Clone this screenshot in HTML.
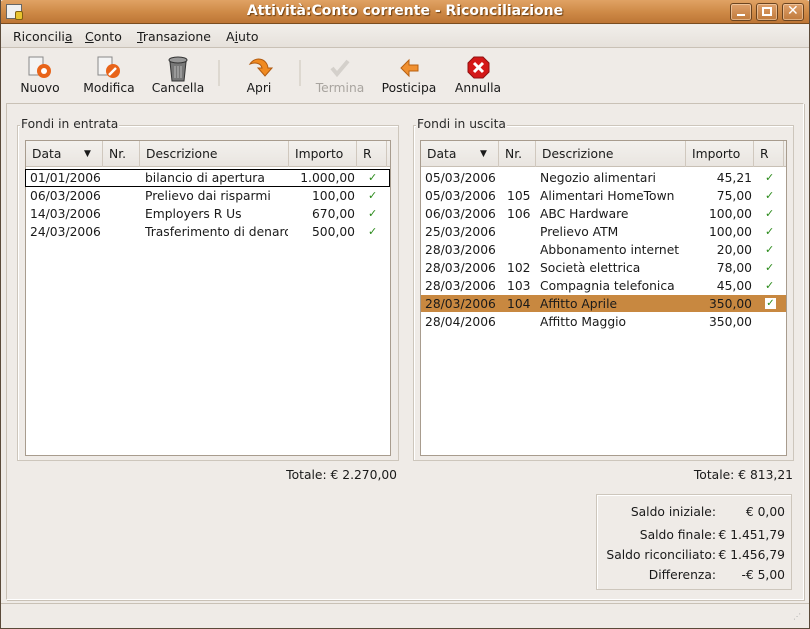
<!DOCTYPE html>
<html><head><meta charset="utf-8"><style>
*{margin:0;padding:0;box-sizing:border-box}
body{width:810px;height:629px;overflow:hidden;background:#efebe7;font-family:"DejaVu Sans","Liberation Sans",sans-serif;font-size:11px;color:#1a1a1a;position:relative}
.a{position:absolute;white-space:nowrap}
#win{position:absolute;left:0;top:0;width:810px;height:629px;border:1px solid #5a4a3a;border-top:none}
#title{position:absolute;left:0;top:0;width:810px;height:24px;background:linear-gradient(#e0a264,#cf8b48 50%,#bd7535);border-bottom:1px solid #7a4d20;border-radius:4px 4px 0 0}
.tb{position:absolute;top:3px;width:22px;height:18px;border:1px solid #6b4420;border-radius:3px;background:linear-gradient(#dea06a,#c07a3c);box-shadow:inset 0 0 0 1px rgba(255,230,200,.5)}
.hdr{position:absolute;top:0;height:26px;border-right:1px solid #d0c8be;padding-left:6px;line-height:26px;font-size:12.3px}
.tree{position:absolute;background:#fff;border:1px solid #a89c8e}
.thead{position:absolute;left:0;top:0;right:0;height:26px;background:linear-gradient(#f3f1ee,#e9e5e0);border-bottom:1px solid #c8c0b5}
.row{position:absolute;left:0;right:0;height:18px;line-height:18px;font-size:12.3px}
.ck{color:#2a8a1a;font-size:11px}
.frame{position:absolute;border:1px solid #cdc6bc;box-shadow:inset 1px 1px 0 #fff}
.flab{position:absolute;background:#efebe7;padding:0 1px;font-size:12.3px;color:#2a2a2a}
.tl{font-size:12.3px;text-align:center}
.s{font-size:12.3px}
</style></head><body>
<div id="title">
 <div class="a" style="left:6px;top:4px;width:16px;height:15px;background:#f0f0f0;border:1px solid #666"></div>
 <div class="a" style="left:15px;top:11px;width:8px;height:9px;background:#e8c430;border:1px solid #806010;border-radius:2px"></div>
 <div class="a" style="left:0;width:810px;top:3px;text-align:center;font-weight:bold;font-size:14px;color:#fff;text-shadow:1px 1px 1px #6a3e12">Attività:Conto corrente - Riconciliazione</div>
 <div class="tb" style="left:730px"><div class="a" style="left:6px;top:10px;width:8px;height:2px;background:#fff"></div></div>
 <div class="tb" style="left:756px"><div class="a" style="left:5px;top:3px;width:10px;height:9px;border:2px solid #fff"></div></div>
 <div class="tb" style="left:782px"><div class="a" style="left:4px;top:-1px;color:#fff;font-weight:bold;font-size:14px">✕</div></div>
</div>
<div class="a" style="left:1px;top:25px;width:808px;height:23px;background:linear-gradient(#f1eeea,#e6e1db);border-bottom:1px solid #c9c1b6"></div>
<div class="a" style="left:13px;top:29px;font-size:12.5px">Riconcili<u>a</u></div>
<div class="a" style="left:85px;top:29px;font-size:12.5px"><u>C</u>onto</div>
<div class="a" style="left:137px;top:29px;font-size:12.5px"><u>T</u>ransazione</div>
<div class="a" style="left:226px;top:29px;font-size:12.5px">A<u>i</u>uto</div>

<svg class="a" style="left:0;top:52px" width="810" height="34">
 <rect x="29" y="5" width="14" height="18" fill="#f4f4f4" stroke="#888"/><circle cx="44" cy="19" r="7" fill="#e8641a"/><circle cx="44" cy="19" r="3" fill="#fff"/>
 <rect x="98" y="5" width="14" height="18" fill="#f4f4f4" stroke="#888"/><circle cx="113" cy="19" r="7" fill="#e8641a"/><path d="M109 23l7-7" stroke="#fff" stroke-width="2.5"/>
 <path d="M170 10h16l-2 19h-12z" fill="#777" stroke="#333"/><ellipse cx="178" cy="8" rx="9" ry="3" fill="#999" stroke="#333"/><path d="M175 14v12M178 14v12M181 14v12" stroke="#bbb"/>
 <line x1="219" y1="8" x2="219" y2="40" stroke="#cbc4ba"/>
 <path d="M250 12c5-8 17-6 18 4l4 0-7 8-7-8 4 0c-1-5-7-6-12-4z" fill="#f08a20" stroke="#b05a10"/>
 <line x1="300" y1="8" x2="300" y2="40" stroke="#cbc4ba"/>
 <path d="M332 16l5 6 11-13" fill="none" stroke="#d4d0cb" stroke-width="4"/>
 <path d="M401 16l8-8v5h9v6h-9v5z" fill="#f09030" stroke="#b86010"/>
 <path d="M474 5h9l6 6v9l-6 6h-9l-6-6v-9z" fill="#d41818" stroke="#901010"/><path d="M474 11l9 9M483 11l-9 9" stroke="#fff" stroke-width="3"/>
</svg>
<div class="a tl" style="left:10px;top:81px;width:60px">Nuovo</div>
<div class="a tl" style="left:79px;top:81px;width:60px">Modifica</div>
<div class="a tl" style="left:146px;top:81px;width:64px">Cancella</div>
<div class="a tl" style="left:229px;top:81px;width:60px">Apri</div>
<div class="a tl" style="left:310px;top:81px;width:60px;color:#a8a49f">Termina</div>
<div class="a tl" style="left:376px;top:81px;width:66px">Posticipa</div>
<div class="a tl" style="left:448px;top:81px;width:60px">Annulla</div>

<div class="a" style="left:6px;top:103px;width:798px;height:497px;border:1px solid #c9c1b6;border-bottom-color:#fff;border-right-color:#fff;box-shadow:1px 1px 0 #c9c1b6"></div>

<div class="frame" style="left:17px;top:125px;width:382px;height:336px"></div>
<div class="flab" style="left:20px;top:117px">Fondi in entrata</div>
<div class="tree" style="left:25px;top:140px;width:366px;height:316px">
 <div class="thead">
  <div class="hdr" style="left:0;width:77px">Data<span class="a" style="left:58px;top:0;font-size:9px">▼</span></div>
  <div class="hdr" style="left:77px;width:37px">Nr.</div>
  <div class="hdr" style="left:114px;width:149px">Descrizione</div>
  <div class="hdr" style="left:263px;width:68px">Importo</div>
  <div class="hdr" style="left:331px;width:30px">R</div>
 </div>
 <div class="row" style="top:28px;border:1px solid #000;height:18px;margin:0 0 0 -1px"></div>
 <div class="row" style="top:28px"><span class="a" style="left:4px">01/01/2006</span><span class="a" style="left:119px">bilancio di apertura</span><span class="a" style="right:35px">1.000,00</span><span class="a ck" style="left:342px">✓</span></div>
 <div class="row" style="top:46px"><span class="a" style="left:4px">06/03/2006</span><span class="a" style="left:119px">Prelievo dai risparmi</span><span class="a" style="right:35px">100,00</span><span class="a ck" style="left:342px">✓</span></div>
 <div class="row" style="top:64px"><span class="a" style="left:4px">14/03/2006</span><span class="a" style="left:119px">Employers R Us</span><span class="a" style="right:35px">670,00</span><span class="a ck" style="left:342px">✓</span></div>
 <div class="row" style="top:82px"><span class="a" style="left:4px">24/03/2006</span><span class="a" style="left:119px;width:143px;overflow:hidden">Trasferimento di denaro</span><span class="a" style="right:35px">500,00</span><span class="a ck" style="left:342px">✓</span></div>
</div>
<div class="a s" style="right:413px;top:468px">Totale: € 2.270,00</div>

<div class="frame" style="left:413px;top:125px;width:381px;height:336px"></div>
<div class="flab" style="left:416px;top:117px">Fondi in uscita</div>
<div class="tree" style="left:420px;top:140px;width:367px;height:316px">
 <div class="thead">
  <div class="hdr" style="left:0;width:78px">Data<span class="a" style="left:59px;top:0;font-size:9px">▼</span></div>
  <div class="hdr" style="left:78px;width:37px">Nr.</div>
  <div class="hdr" style="left:115px;width:150px">Descrizione</div>
  <div class="hdr" style="left:265px;width:68px">Importo</div>
  <div class="hdr" style="left:333px;width:30px">R</div>
 </div>
 <div class="row" style="top:28px"><span class="a" style="left:4px">05/03/2006</span><span class="a" style="left:119px">Negozio alimentari</span><span class="a" style="right:34px">45,21</span><span class="a ck" style="left:344px">✓</span></div>
 <div class="row" style="top:46px"><span class="a" style="left:4px">05/03/2006</span><span class="a" style="left:86px">105</span><span class="a" style="left:119px">Alimentari HomeTown</span><span class="a" style="right:34px">75,00</span><span class="a ck" style="left:344px">✓</span></div>
 <div class="row" style="top:64px"><span class="a" style="left:4px">06/03/2006</span><span class="a" style="left:86px">106</span><span class="a" style="left:119px">ABC Hardware</span><span class="a" style="right:34px">100,00</span><span class="a ck" style="left:344px">✓</span></div>
 <div class="row" style="top:82px"><span class="a" style="left:4px">25/03/2006</span><span class="a" style="left:119px">Prelievo ATM</span><span class="a" style="right:34px">100,00</span><span class="a ck" style="left:344px">✓</span></div>
 <div class="row" style="top:100px"><span class="a" style="left:4px">28/03/2006</span><span class="a" style="left:119px;width:145px;overflow:hidden">Abbonamento internet</span><span class="a" style="right:34px">20,00</span><span class="a ck" style="left:344px">✓</span></div>
 <div class="row" style="top:118px"><span class="a" style="left:4px">28/03/2006</span><span class="a" style="left:86px">102</span><span class="a" style="left:119px">Società elettrica</span><span class="a" style="right:34px">78,00</span><span class="a ck" style="left:344px">✓</span></div>
 <div class="row" style="top:136px"><span class="a" style="left:4px">28/03/2006</span><span class="a" style="left:86px">103</span><span class="a" style="left:119px">Compagnia telefonica</span><span class="a" style="right:34px">45,00</span><span class="a ck" style="left:344px">✓</span></div>
 <div class="row" style="top:154px;background:#c88840;height:17px"><span class="a" style="left:4px">28/03/2006</span><span class="a" style="left:86px">104</span><span class="a" style="left:119px">Affitto Aprile</span><span class="a" style="right:34px">350,00</span><span class="a" style="left:344px;top:3px;width:11px;height:11px;background:#fff;color:#2a8a1a;font-size:10px;line-height:11px;text-align:center">✓</span></div>
 <div class="row" style="top:172px"><span class="a" style="left:4px">28/04/2006</span><span class="a" style="left:119px">Affitto Maggio</span><span class="a" style="right:34px">350,00</span></div>
</div>
<div class="a s" style="right:17px;top:468px">Totale: € 813,21</div>

<div class="frame" style="left:596px;top:494px;width:196px;height:96px"></div>
<div class="a s" style="right:94px;top:505px">Saldo iniziale:</div><div class="a s" style="right:25px;top:505px">€ 0,00</div>
<div class="a s" style="right:94px;top:528px">Saldo finale:</div><div class="a s" style="right:25px;top:528px">€ 1.451,79</div>
<div class="a s" style="right:94px;top:548px">Saldo riconciliato:</div><div class="a s" style="right:25px;top:548px">€ 1.456,79</div>
<div class="a s" style="right:94px;top:568px">Differenza:</div><div class="a s" style="right:25px;top:568px">-€ 5,00</div>

<div class="a" style="left:1px;top:603px;width:808px;height:1px;background:#c9c1b6"></div>
<div class="a" style="left:793px;top:612px;color:#aaa;font-size:8px">⋰</div>
<div id="win"></div>
</body></html>
